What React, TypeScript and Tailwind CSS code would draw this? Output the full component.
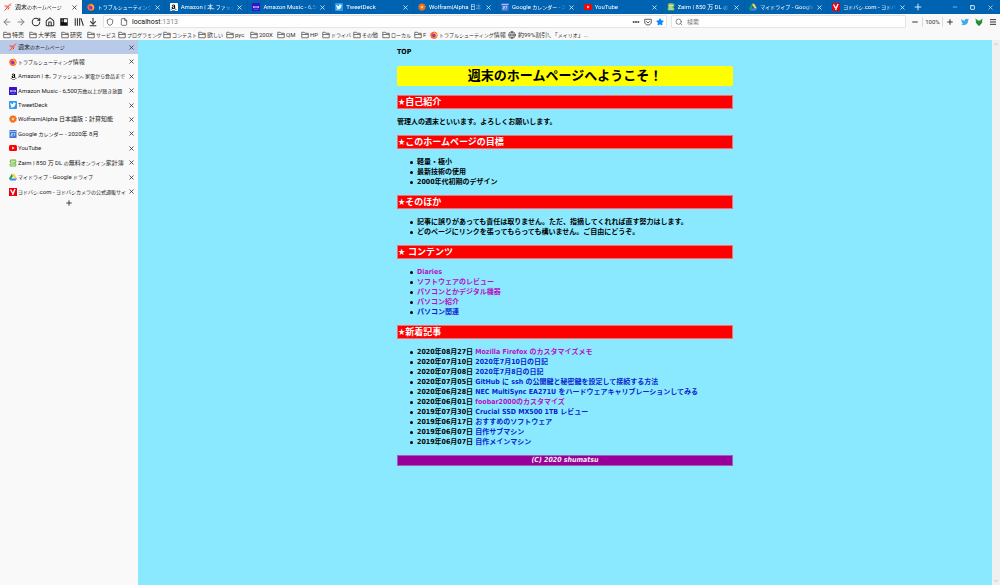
import React from "react";
import {
  ArrowDownToLine, ArrowLeft, ArrowRight, Ellipsis, File, Globe, House,
  Menu, Minus, Plus, RotateCw, Search, Shield, Star, X, ChevronUp, ChevronDown, Square,
} from "lucide-react";
import { FaAmazon, FaTwitter } from "react-icons/fa";

type IconName =
  | "home" | "firefox" | "amazon" | "music" | "tweetdeck" | "wolfram"
  | "calendar" | "youtube" | "zaim" | "drive" | "yodobashi";

const sites: { icon: IconName; tab: string; side: string; compact?: boolean }[] = [
  { icon: "home", tab: "週末のホームページ", side: "週末のホームページ" },
  { icon: "firefox", tab: "トラブルシューティング情", side: "トラブルシューティング情報" },
  { icon: "amazon", tab: "Amazon | 本, ファッシ", side: "Amazon | 本, ファッション, 家電から食品まで |", compact: true },
  { icon: "music", tab: "Amazon Music - 6,50", side: "Amazon Music - 6,500万曲以上が聴き放題", compact: true },
  { icon: "tweetdeck", tab: "TweetDeck", side: "TweetDeck" },
  { icon: "wolfram", tab: "Wolfram|Alpha 日本", side: "Wolfram|Alpha 日本語版：計算知能" },
  { icon: "calendar", tab: "Google カレンダー - 20", side: "Google カレンダー - 2020年 8月" },
  { icon: "youtube", tab: "YouTube", side: "YouTube" },
  { icon: "zaim", tab: "Zaim | 850 万 DL の", side: "Zaim | 850 万 DL の無料オンライン家計簿" },
  { icon: "drive", tab: "マイドライブ - Google", side: "マイドライブ - Google ドライブ" },
  { icon: "yodobashi", tab: "ヨドバシ.com - ヨドバ", side: "ヨドバシ.com - ヨドバシカメラの公式通販サイト", compact: true },
];

const bookmarks = [
  { label: "特売", width: "w-[26px]" },
  { label: "大学院", width: "w-8" },
  { label: "研究", width: "w-[26px]" },
  { label: "サービス", width: "w-[31px]" },
  { label: "プログラミング", width: "w-[45px]" },
  { label: "コンテスト", width: "w-[35px]" },
  { label: "欲しい", width: "w-7" },
  { label: "pyc", width: "w-6" },
  { label: "200X", width: "w-[27px]" },
  { label: "QM", width: "w-6" },
  { label: "HP", width: "w-[21px]" },
  { label: "ドライバ", width: "w-[31px]" },
  { label: "その他", width: "w-[29px]" },
  { label: "ローカル", width: "w-8" },
  { label: "F", width: "w-4" },
];

/* Sets runs of kana a step smaller than the surrounding interface text. */
function Label({ children }: { children: string }) {
  return (
    <>
      {children.split(/([ぁ-んァ-ヶー]+)/).map((part, i) =>
        i % 2 ? <span key={i} className="text-[5px]">{part}</span> : part,
      )}
    </>
  );
}

function FolderIcon() {
  return (
    <svg viewBox="0 0 16 16" className="size-2 shrink-0" fill="none" stroke="#555" strokeWidth="1.600">
      <path d="M1.500 13.500v-11h5l1.500 2h6.500v9zM1.500 7h13" />
    </svg>
  );
}

function Favicon({ name }: { name: IconName }) {
  const cls = "size-2 shrink-0";
  switch (name) {
    case "home":
      return (
        <svg viewBox="0 0 16 16" className={cls} fill="none" stroke="#ee4438" strokeWidth="2">
          <path d="M1 6h6M14 1L9 6l-3 4-5 5M7 6l3 3-2 4" />
          <path d="M9 4l5 1M3 9l4 1" stroke="#f08a5c" strokeWidth="1.500" />
        </svg>
      );
    case "firefox":
      return (
        <svg viewBox="0 0 16 16" className={cls}>
          <circle cx="8" cy="8.5" r="7" fill="#ff4f32" />
          <path d="M2 3l2 2c1-2 3-3 5-4 0 2 3 3 5 6 1 5-2 8-6 8C4 15 1 12 1 8z" fill="#ff7139" />
          <path d="M9 1c0 3 4 3 5 7 1 3-1 5-3 6 2-4 0-7-3-8z" fill="#ffbd2f" />
          <circle cx="7.6" cy="8.8" r="3.4" fill="#7a3cc8" />
          <path d="M2 6c3-1 5 0 6 1-2 0-3 1-3 3z" fill="#ff3b57" />
        </svg>
      );
    case "amazon":
      return (
        <span className={cls + " flex items-center justify-center rounded-[1px] bg-white text-black"}>
          <FaAmazon className="size-[7px]" />
        </span>
      );
    case "music":
      return (
        <svg viewBox="0 0 16 16" className={cls}>
          <rect width="16" height="16" rx="1" fill="#3811c9" />
          <path d="M3 10V6m2.500 4V6M8 10V6m2.500 4V6M13 10V6" stroke="#fff" strokeWidth="1.300" />
          <path d="M3 12q5 2 10 0" stroke="#32c8e8" fill="none" />
        </svg>
      );
    case "tweetdeck":
      return (
        <span className={cls + " flex items-center justify-center rounded-[1px] bg-[#2a9df0] text-white"}>
          <FaTwitter className="size-1.5" />
        </span>
      );
    case "wolfram":
      return (
        <svg viewBox="0 0 16 16" className={cls}>
          <path d="M8 0l2 2 3-.5.5 3L16 7l-1.500 2.500.5 3-3 .5L10 16l-2-1.500L5 16l-1-3-3-.5.5-3L0 7l2.500-2.500L3 1.500 6 2z" fill="#f36f16" />
          <path d="M8 4.500l1 2.200 2.400.1-1.600 1.700.6 2.500L8 9.800 5.600 11l.6-2.500-1.600-1.700 2.400-.1z" fill="#ffd7a8" />
        </svg>
      );
    case "calendar":
      return (
        <svg viewBox="0 0 16 16" className={cls}>
          <rect x="1" width="14" height="16" rx="1" fill="#3f72d8" />
          <path d="M1 3h14" stroke="#a9c2f2" strokeWidth="2" />
          <path d="M4 7h3v2.500H4V12h3.500M9 7h3l-2 5.500" stroke="#fff" strokeWidth="1.200" fill="none" />
        </svg>
      );
    case "youtube":
      return (
        <svg viewBox="0 0 16 16" className={cls}>
          <rect y="2" width="16" height="12" rx="3" fill="#f00" />
          <path d="M6.500 5.200v5.600L11 8z" fill="#fff" />
        </svg>
      );
    case "zaim":
      return (
        <svg viewBox="0 0 16 16" className={cls}>
          <path d="M3 1h11l1 5-2 2 2 3-1 4H2l-1-4 2-3-2-3z" fill="#6cba45" />
          <path d="M4 4.500h9M3 8h8M3 12h10" stroke="#fff" strokeWidth="1.700" />
          <path d="M3 2h8" stroke="#f5c440" strokeWidth="1.500" />
        </svg>
      );
    case "drive":
      return (
        <svg viewBox="0 0 16 16" className={cls}>
          <path d="M5.500 1.500L0 11l2.700 4L8 5.800z" fill="#1aa260" />
          <path d="M5.500 1.500h5L16 11h-5z" fill="#ffcf3f" />
          <path d="M5.300 11H16l-2.700 4H2.700z" fill="#4285f4" />
        </svg>
      );
    case "yodobashi":
      return (
        <svg viewBox="0 0 16 16" className={cls}>
          <rect width="16" height="16" fill="#e60012" />
          <path d="M3 3l4 7M12 2L7 14" stroke="#fff" strokeWidth="2.800" />
        </svg>
      );
  }
}

function ToolButton({ label, children }: { label: string; children: React.ReactNode }) {
  return (
    <button type="button" aria-label={label} className="flex shrink-0 items-center justify-center [&>svg]:size-2.5">
      {children}
    </button>
  );
}

function TabStrip() {
  return (
    <div className="flex h-3.5 bg-[#0063b1] text-white">
      <div role="tablist" aria-label="タブ" className="flex w-[91%]">
        {sites.map((site, i) => (
          <div
            key={site.icon}
            className={
              "flex min-w-0 flex-1 items-center gap-0.5 pr-1 pl-1 " +
              (i === 0 ? "bg-[#f9f9fa] text-[#222]" : "border-l border-[#0a58a0]")
            }
          >
            <button
              type="button"
              role="tab"
              aria-selected={i === 0}
              className="flex min-w-0 flex-1 items-center gap-[3px]"
            >
              <Favicon name={site.icon} />
              <span className="min-w-0 flex-1 mask-r-from-80% text-left text-[6px] leading-3 whitespace-nowrap">
                <Label>{site.tab}</Label>
              </span>
            </button>
            <button type="button" aria-label="タブを閉じる" className="shrink-0">
              <X className="size-[7px]" strokeWidth={2.5} />
            </button>
          </div>
        ))}
      </div>
      <div className="flex flex-1 items-center justify-between pr-1.5 pl-[3px]">
        <ToolButton label="新しいタブ"><Plus /></ToolButton>
        <div className="flex gap-3">
          <button type="button" aria-label="最小化"><Minus className="size-1.5" /></button>
          <button type="button" aria-label="元に戻す"><Square className="size-[5px]" strokeWidth={4} /></button>
          <button type="button" aria-label="閉じる"><X className="size-[7px]" /></button>
        </div>
      </div>
    </div>
  );
}

function Toolbar() {
  return (
    <div className="flex h-[15px] items-center bg-[#f9f9fa] pr-[3px] pl-0.5 text-[#333]">
      <div className="flex w-24 shrink-0 items-center justify-between">
        <span className="contents text-[#888]">
          <ToolButton label="戻る"><ArrowLeft strokeWidth={2.5} /></ToolButton>
          <ToolButton label="進む"><ArrowRight strokeWidth={2.5} /></ToolButton>
        </span>
        <ToolButton label="再読み込み"><RotateCw strokeWidth={2.5} /></ToolButton>
        <ToolButton label="ホーム"><House strokeWidth={2.5} /></ToolButton>
        <ToolButton label="拡張機能">
          <svg viewBox="0 0 16 16">
            <rect x="2" y="2" width="12" height="12" fill="#111" />
            <path d="M8 3.500h5v5H8z" fill="#f4f4f4" />
            <path d="M4 4h3v4H4z" fill="#777" />
          </svg>
        </ToolButton>
        <ToolButton label="ライブラリ">
          <svg viewBox="0 0 16 16" stroke="currentColor" strokeWidth="1.700">
            <path d="M2 2v12M5.500 2v12M9 2v12M11 2l4 12" />
          </svg>
        </ToolButton>
        <ToolButton label="ダウンロード"><ArrowDownToLine strokeWidth={2.5} /></ToolButton>
      </div>
      <form className="ml-[5px] flex h-[13px] min-w-0 flex-1 items-center gap-1 rounded-[1px] border border-[#e4e4e6] bg-white px-0.5">
        <Shield className="size-2 shrink-0" />
        <File className="ml-0.5 size-2 shrink-0" />
        <span className="relative flex min-w-0 flex-1 items-center text-[7px] leading-3">
          <input aria-label="アドレス" defaultValue="localhost:1313" className="w-full bg-transparent text-transparent caret-black outline-none" />
          <span aria-hidden="true" className="pointer-events-none absolute left-0 text-[#111]">
            localhost<span className="text-[#888]">:1313</span>
          </span>
        </span>
        <button type="button" aria-label="ページ操作"><Ellipsis className="size-2" strokeWidth={4} /></button>
        <button type="button" aria-label="Pocket に保存">
          <svg viewBox="0 0 16 16" className="size-2" fill="none" stroke="#444" strokeWidth="1.700">
            <path d="M1.500 2.500h13V8c0 8-13 8-13 0zM4.500 6.500L8 9.800l3.500-3.300" />
          </svg>
        </button>
        <button type="button" aria-label="ブックマーク"><Star className="size-2 fill-[#0a84ff] text-[#0a84ff]" /></button>
      </form>
      <label className="ml-1 flex h-[13px] w-[235px] items-center gap-1 rounded-[1px] border border-[#e4e4e6] bg-white px-[3px]">
        <Search className="size-2 shrink-0 text-[#555]" />
        <input aria-label="検索" placeholder="検索" className="w-full text-[6px] leading-3 outline-none placeholder:text-[#777]" />
      </label>
      <div className="ml-[5px] flex shrink-0 items-center gap-[3px]">
        <button type="button" aria-label="縮小"><Minus className="size-2" strokeWidth={3} /></button>
        <button type="button" className="w-[21px] border-x border-[#ddd] text-center text-[6px] leading-[10px]">100%</button>
        <button type="button" aria-label="拡大"><Plus className="size-2" strokeWidth={3} /></button>
      </div>
      <div className="ml-[7px] flex shrink-0 items-center gap-1.5">
        <button type="button" aria-label="Twitter"><FaTwitter className="size-2 text-[#45a6ea]" /></button>
        <button type="button" aria-label="Foxy">
          <svg viewBox="0 0 16 16" className="size-2">
            <path d="M1 1l5 4h4l5-4-1 8-6 6-6-6z" fill="#24963f" />
            <path d="M1 8l5 1 2 4 2-4 5-1-4 5-3 3-3-3z" fill="#1b8336" />
          </svg>
        </button>
        <button type="button" aria-label="メニュー"><Menu className="size-2" strokeWidth={3} /></button>
      </div>
    </div>
  );
}

function BookmarkBar() {
  return (
    <nav aria-label="ブックマーク" className="flex h-[11px] items-center bg-[#f9f9fa] pl-[3px] text-[6px] leading-[10px] whitespace-nowrap text-[#333]">
      {bookmarks.map((b) => (
        <button key={b.label} type="button" className={"flex shrink-0 items-center gap-px " + b.width}>
          <FolderIcon />
          <span><Label>{b.label}</Label></span>
        </button>
      ))}
      <a href="#support" className="flex w-[78px] shrink-0 items-center gap-px">
        <Favicon name="firefox" />
        <span><Label>トラブルシューティング情報</Label></span>
      </a>
      <a href="#sale" className="flex items-center gap-0.5">
        <Globe className="size-2" />
        <span><Label>約99%割引!、「メイリオ」...</Label></span>
      </a>
    </nav>
  );
}

function CompactLabel({ children }: { children: string }) {
  return (
    <>
      {children.split(/([^\x00-\x7f]+)/).map((part, i) =>
        i % 2 ? <span key={i} className="text-[5px]">{part}</span> : part,
      )}
    </>
  );
}

function Sidebar() {
  return (
    <aside className="w-[138px] shrink-0 bg-[#f9f9fa] text-[#222]">
      <ul className="flex h-[159px] flex-col">
        {sites.map((site, i) => (
          <li key={site.icon} className={"flex flex-1 items-center gap-0.5 pr-[3px] pl-[9px] " + (i === 0 ? "bg-[#b9c9e8]" : "")}>
            <button type="button" className="flex min-w-0 flex-1 items-center gap-px">
              <Favicon name={site.icon} />
              <span className="min-w-0 flex-1 overflow-hidden text-left text-[6px] leading-3 whitespace-nowrap">
                {site.compact ? <CompactLabel>{site.side}</CompactLabel> : <Label>{site.side}</Label>}
              </span>
            </button>
            <button type="button" aria-label="タブを閉じる" className="shrink-0">
              <X className="size-[7px]" strokeWidth={2.5} />
            </button>
          </li>
        ))}
      </ul>
      <button type="button" aria-label="新しいタブ" className="mx-auto block">
        <Plus className="size-2" strokeWidth={2.5} />
      </button>
    </aside>
  );
}

const contents = [
  { label: "Diaries", visited: true },
  { label: "ソフトウェアのレビュー", visited: true },
  { label: "パソコンとかデジタル機器", visited: true },
  { label: "パソコン紹介", visited: true },
  { label: "パソコン関連", visited: false },
];

const articles = [
  { date: "2020年08月27日", title: "Mozilla Firefox のカスタマイズメモ", visited: true },
  { date: "2020年07月10日", title: "2020年7月10日の日記", visited: false },
  { date: "2020年07月08日", title: "2020年7月8日の日記", visited: false },
  { date: "2020年07月05日", title: "GitHub に ssh の公開鍵と秘密鍵を設定して接続する方法", visited: false },
  { date: "2020年06月28日", title: "NEC MultiSync EA271U をハードウェアキャリブレーションしてみる", visited: false },
  { date: "2020年06月01日", title: "foobar2000のカスタマイズ", visited: true },
  { date: "2019年07月30日", title: "Crucial SSD MX500 1TB レビュー", visited: false },
  { date: "2019年06月17日", title: "おすすめのソフトウェア", visited: false },
  { date: "2019年06月07日", title: "自作サブマシン", visited: false },
  { date: "2019年06月07日", title: "自作メインマシン", visited: false },
];

function PageLink({ visited, children }: { visited: boolean; children: string }) {
  return <a href="#article" className={visited ? "text-[#b711c4]" : "text-[#0a1fd0]"}>{children}</a>;
}

function Section({ title, children }: { title: string; children: React.ReactNode }) {
  return (
    <section>
      <h2 className="flex h-3.5 items-center border border-[#ff6a70] bg-[#ff0000] text-[9px] leading-3 text-white">
        {title}
      </h2>
      <div className="py-2">{children}</div>
    </section>
  );
}

function List({ children }: { children: React.ReactNode }) {
  return <ul className="pl-[13px] whitespace-nowrap">{children}</ul>;
}

function Item({ children }: { children: React.ReactNode }) {
  return (
    <li className="flex items-center gap-1 before:size-[3px] before:shrink-0 before:rounded-full before:bg-black">
      <span>{children}</span>
    </li>
  );
}

function HomePage() {
  return (
    <main className="min-w-0 flex-1 bg-[#8ae9ff] font-['DejaVu_Sans_Condensed','Noto_Sans','Noto_Sans_CJK_JP',sans-serif] text-[7px] leading-[10px] font-bold text-black">
      <div className="mx-auto max-w-[336px] pt-[7px]">
        <p>TOP</p>
        <h1 className="my-[9px] flex h-5 items-center justify-center rounded-[2px] bg-[#ffff00] text-[13px] leading-5">
          週末のホームページへようこそ！
        </h1>
        <Section title="★自己紹介">
          <p>管理人の週末といいます。よろしくお願いします。</p>
        </Section>
        <Section title="★このホームページの目標">
          <List>
            <Item>軽量・極小</Item>
            <Item>最新技術の使用</Item>
            <Item>2000年代初期のデザイン</Item>
          </List>
        </Section>
        <Section title="★そのほか">
          <List>
            <Item>記事に誤りがあっても責任は取りません。ただ、指摘してくれれば直す努力はします。</Item>
            <Item>どのページにリンクを張ってもらっても構いません。ご自由にどうぞ。</Item>
          </List>
        </Section>
        <Section title="★ コンテンツ">
          <List>
            {contents.map((c) => (
              <Item key={c.label}><PageLink visited={c.visited}>{c.label}</PageLink></Item>
            ))}
          </List>
        </Section>
        <Section title="★新着記事">
          <List>
            {articles.map((a) => (
              <Item key={a.title}>{a.date} <PageLink visited={a.visited}>{a.title}</PageLink></Item>
            ))}
          </List>
        </Section>
        <footer className="border border-[#a55cc0] bg-[#990099] text-center leading-[9px] text-[#eee] italic">
          (C) 2020 shumatsu
        </footer>
      </div>
    </main>
  );
}

export default function App() {
  return (
    <div className="flex min-h-screen flex-col font-[Roboto,'Noto_Sans_CJK_JP',sans-serif]">
      <header>
        <TabStrip />
        <Toolbar />
        <BookmarkBar />
      </header>
      <div className="flex flex-1">
        <Sidebar />
        <HomePage />
        <div aria-hidden="true" className="flex w-2 shrink-0 flex-col items-center justify-between bg-[#f0f0f0] py-px text-[#999]">
          <ChevronUp className="size-1.5" />
          <ChevronDown className="size-1.5" />
        </div>
      </div>
    </div>
  );
}
